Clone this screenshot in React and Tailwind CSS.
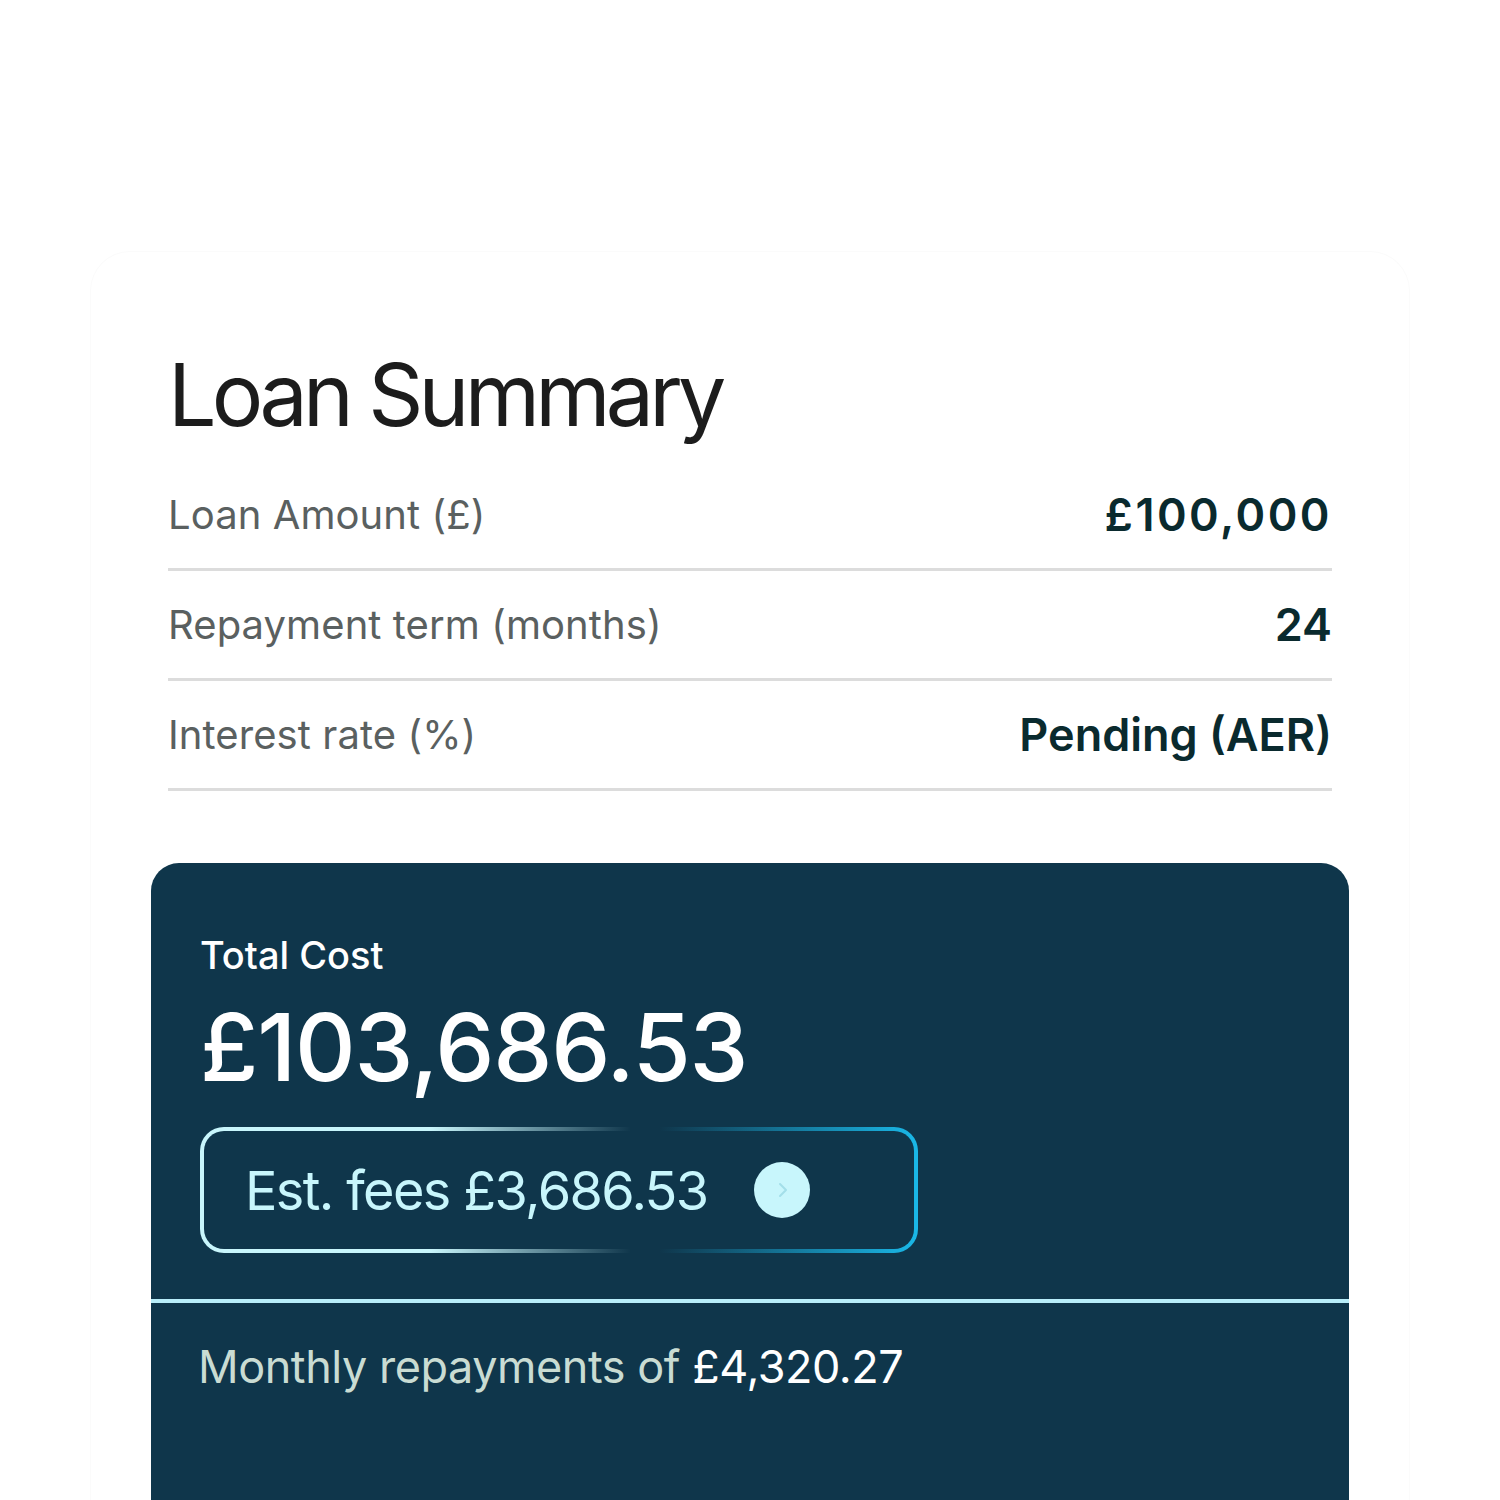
export default function App() {
  const rows = [
    { label: "Loan Amount (£)", value: "£100,000", extra: "tracking-[0.055em]" },
    { label: "Repayment term (months)", value: "24", extra: "" },
    { label: "Interest rate (%)", value: "Pending (AER)", extra: "" },
  ];

  return (
    <div className="w-[1500px] h-[1500px] bg-white overflow-hidden font-['Inter',sans-serif]">
      <div className="pt-[251px] px-[90px] h-full">
        {/* outer summary sheet */}
        <div className="h-full rounded-t-[40px] border border-b-0 border-[#fbfbfb] px-[60px]">
          <div className="px-[17px]">
            <h1 className="mt-[93px] text-[86px] leading-[100px] font-normal tracking-[-0.056em] text-[#1c1c1c]">
              Loan Summary
            </h1>
            <div className="mt-[16px]">
              {rows.map((r) => (
                <div
                  key={r.label}
                  className="flex items-center justify-between h-[110px] border-b-[3px] border-[#dcdcdc]"
                >
                  <span className="text-[40px] tracking-[0.002em] text-[#5a6060]">{r.label}</span>
                  <span className={`text-[45px] font-semibold text-[#0a2a2e] ${r.extra}`}>{r.value}</span>
                </div>
              ))}
            </div>
          </div>

          {/* total cost panel */}
          <div className="mt-[72px] bg-[#0f364b] rounded-t-[28px] h-[700px]">
            <div className="px-[49px] pt-[70px] pb-[46px]">
              <div className="text-[38px] font-medium text-white leading-[44px]">Total Cost</div>
              <div className="mt-[20px] text-[94px] font-medium text-white leading-[100px] tracking-[-0.012em]">
                £103,686.53
              </div>
              <div className="mt-[30px] w-[718px] h-[126px] rounded-[24px] p-[4px] bg-[linear-gradient(90deg,#c8f6fc_0%,#c8f6fc_32%,#0f364b_60%,#0f364b_64%,#1ab8e8_100%)]">
                <div className="w-full h-full rounded-[20px] bg-[#0f364b] flex items-center pl-[41px]">
                  <span className="text-[54px] text-[#c8f6fc] tracking-[-0.03em]">Est. fees £3,686.53</span>
                  <span className="ml-[46px] w-[56px] h-[56px] rounded-full bg-[#c8f6fc] flex items-center justify-center">
                    <svg width="20" height="20" viewBox="0 0 20 20" fill="none">
                      <path d="M8 4l6 6-6 6" stroke="#a3dfe9" strokeWidth="2" strokeLinecap="round" strokeLinejoin="round" />
                    </svg>
                  </span>
                </div>
              </div>
            </div>
            <div className="h-[4px] bg-[#b8eefa]" />
            <div className="px-[47px] pt-[30px] text-[45px] tracking-[-0.01em]">
              <span className="text-[#c9dcd3]">Monthly repayments of </span>
              <span className="text-white">£4,320.27</span>
            </div>
          </div>
        </div>
      </div>
    </div>
  );
}
